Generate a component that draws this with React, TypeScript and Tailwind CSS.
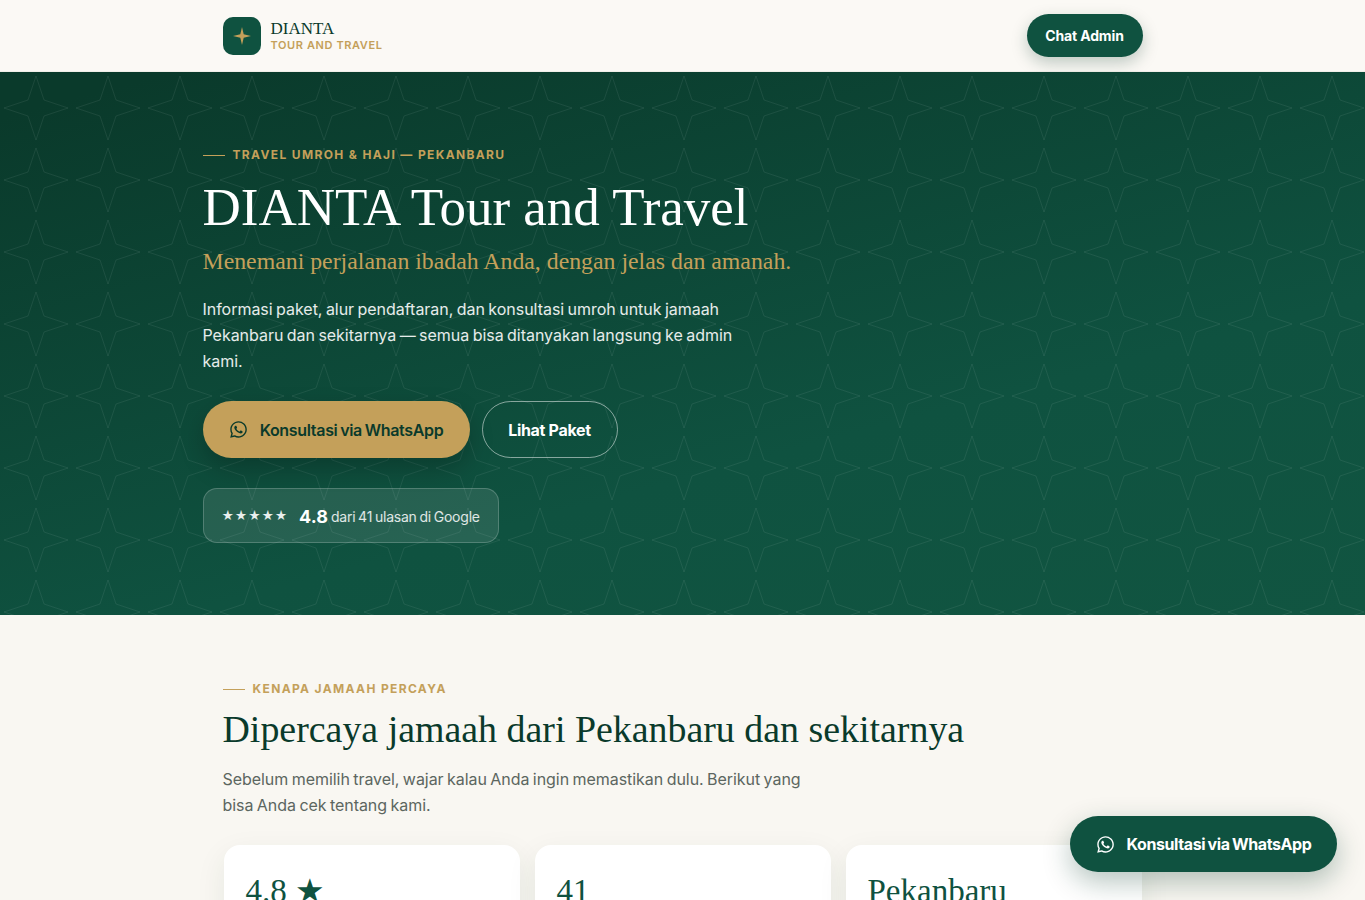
import { FaWhatsapp } from "react-icons/fa"

const SERIF = "font-['Liberation_Serif',serif]"

function StarPattern() {
  return (
    <svg className="absolute inset-0 h-full w-full" aria-hidden="true">
      <defs>
        <pattern id="stars" width="72" height="72" patternUnits="userSpaceOnUse">
          <path d="M36 4 L44 28 L68 36 L44 44 L36 68 L28 44 L4 36 L28 28 Z" fill="none" stroke="#ffffff" strokeOpacity="0.07" strokeWidth="1" />
        </pattern>
      </defs>
      <rect width="100%" height="100%" fill="url(#stars)" />
    </svg>
  )
}

function Eyebrow({ children }: { children: string }) {
  return (
    <div className="flex items-center gap-2 text-[12px] leading-[16px] font-bold tracking-[0.113em] text-[#c4a05a]">
      <span className="h-px w-[22px] bg-[#c4a05a]" />
      {children}
    </div>
  )
}

function StatCard({ children }: { children: React.ReactNode }) {
  return (
    <div className="h-[160px] rounded-2xl bg-white px-[22px] pt-[28px] shadow-[0_10px_30px_rgba(10,58,43,0.08)]">
      <div className={`${SERIF} text-[33px] leading-[36px] text-[#0f5240]`}>{children}</div>
    </div>
  )
}

export default function App() {
  return (
    <div className="relative h-[900px] overflow-hidden bg-[#f9f7f2] font-['Inter',sans-serif]">
      <header className="h-[72px] border-b border-[#f1efe9] bg-[#fbf9f5]">
        <div className="mx-auto flex h-full w-[920px] items-center justify-between">
          <div className="flex items-center gap-[10px]">
            <div className="flex h-[38px] w-[38px] items-center justify-center rounded-[10px] bg-[#0f5240]">
              <svg width="18" height="18" viewBox="0 0 18 18">
                <path d="M9 0 L10.7 7.3 L18 9 L10.7 10.7 L9 18 L7.3 10.7 L0 9 L7.3 7.3 Z" fill="#c4a05a" />
              </svg>
            </div>
            <div>
              <div className={`${SERIF} text-[17px] leading-[18px] text-[#0a3a2b]`}>DIANTA</div>
              <div className="text-[11px] leading-[14px] font-semibold tracking-[0.055em] text-[#c4a05a]">TOUR AND TRAVEL</div>
            </div>
          </div>
          <button className="h-[43px] w-[116px] rounded-full bg-[#0f5240] text-[14px] font-bold tracking-[-0.01em] text-white shadow-[0_6px_16px_rgba(10,58,43,0.25)]">
            Chat Admin
          </button>
        </div>
      </header>

      <section className="relative h-[543px] bg-[linear-gradient(165deg,#0a3a2b_5%,#0f5240_65%,#115541_100%)]">
        <StarPattern />
        <div className="relative mx-auto w-[960px] pt-[75px]">
          <Eyebrow>TRAVEL UMROH &amp; HAJI — PEKANBARU</Eyebrow>
          <h1 className={`${SERIF} mt-[14px] text-[53px] leading-[60px] text-white`}>DIANTA Tour and Travel</h1>
          <p className={`${SERIF} mt-[8px] text-[23.8px] leading-[32px] text-[#c4a05a]`}>
            Menemani perjalanan ibadah Anda, dengan jelas dan amanah.
          </p>
          <p className="mt-[19px] w-[560px] text-[16px] leading-[26px] tracking-[-0.002em] [word-spacing:-1px] text-white/90">
            Informasi paket, alur pendaftaran, dan konsultasi umroh untuk jamaah Pekanbaru dan sekitarnya — semua bisa ditanyakan langsung ke admin kami.
          </p>
          <div className="mt-[27px] flex gap-3">
            <button className="flex h-[57px] w-[267px] items-center justify-center gap-[12px] rounded-full bg-[#c4a05a] text-[16px] font-semibold tracking-[-0.02em] [word-spacing:-1px] text-[#0a3a2b] shadow-[0_10px_24px_rgba(0,0,0,0.22)]">
              <FaWhatsapp className="text-[19px]" />
              Konsultasi via WhatsApp
            </button>
            <button className="h-[57px] w-[136px] rounded-full border border-white/50 text-[16px] font-bold tracking-[-0.02em] text-white">
              Lihat Paket
            </button>
          </div>
          <div className="mt-[30px] flex h-[55px] w-[296px] items-center whitespace-nowrap rounded-[14px] border border-white/20 bg-white/10 px-[18px]">
            <span className="text-[12px] tracking-[0.065em] text-white/90">★★★★★</span>
            <span className="ml-[11px] mt-[2px] text-[18px] font-bold text-white">4.8</span>
            <span className="ml-[3px] mt-[2px] text-[14px] tracking-[-0.015em] [word-spacing:-1px] text-white/85">dari 41 ulasan di Google</span>
          </div>
        </div>
      </section>

      <main className="mx-auto w-[920px] pt-[66px]">
        <Eyebrow>KENAPA JAMAAH PERCAYA</Eyebrow>
        <h2 className={`${SERIF} mt-[10px] text-[37.9px] leading-[44px] text-[#0a3a2b]`}>Dipercaya jamaah dari Pekanbaru dan sekitarnya</h2>
        <p className="mt-[15px] w-[600px] text-[16px] leading-[26px] tracking-[-0.003em] [word-spacing:-1px] text-[#5c6660]">
          Sebelum memilih travel, wajar kalau Anda ingin memastikan dulu. Berikut yang bisa Anda cek tentang kami.
        </p>
        <div className="ml-px mt-[27px] grid grid-cols-[repeat(3,296px)] gap-[15px]">
          <StatCard>4.8 ★</StatCard>
          <StatCard>41</StatCard>
          <StatCard>Pekanbaru</StatCard>
        </div>
      </main>

      <button className="absolute right-[28px] top-[816px] flex h-[56px] w-[267px] items-center justify-center gap-[12px] rounded-full bg-[#0f5240] text-[16px] font-bold tracking-[-0.025em] [word-spacing:-1px] text-white shadow-[0_10px_28px_rgba(10,58,43,0.3)]">
        <FaWhatsapp className="text-[19px]" />
        Konsultasi via WhatsApp
      </button>
    </div>
  )
}
